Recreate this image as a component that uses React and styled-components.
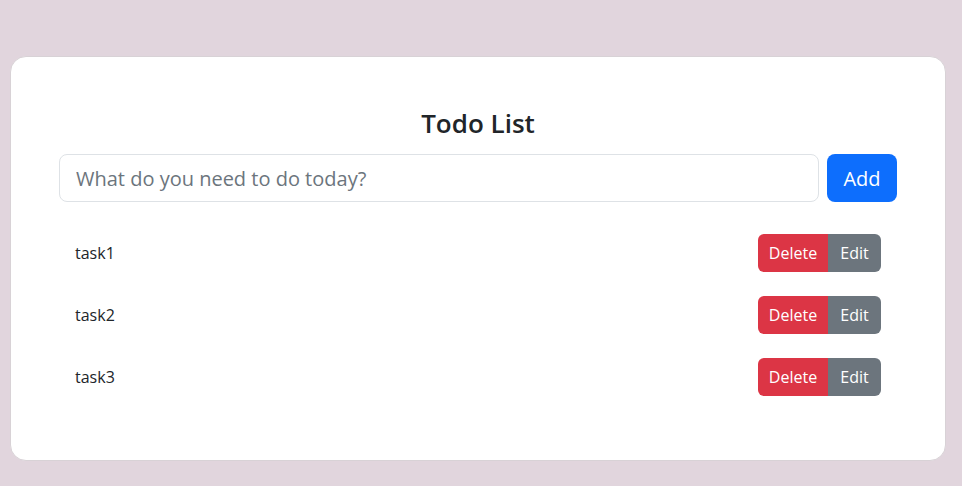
import React, { useState } from "react";
import styled, { createGlobalStyle } from "styled-components";

const GlobalStyle = createGlobalStyle`
  html, body {
    margin: 0;
    padding: 0;
    background: #e1d5dd;
    font-family: "Segoe UI", "Open Sans", "Noto Sans", sans-serif;
    color: #212529;
  }
  * {
    box-sizing: border-box;
  }
`;

const initialTasks = ["task1", "task2", "task3"];

const App = () => {
  const [tasks, setTasks] = useState(initialTasks);
  const [text, setText] = useState("");

  const handleAdd = e => {
    e.preventDefault();
    if (!text.trim()) return;
    setTasks([...tasks, text]);
    setText("");
  };

  const handleDelete = index => {
    setTasks(tasks.filter((_, i) => i !== index));
  };

  return (
    <Page>
      <GlobalStyle />
      <Card>
        <Title>Todo List</Title>
        <Form onSubmit={handleAdd}>
          <Input
            placeholder="What do you need to do today?"
            value={text}
            onChange={e => setText(e.target.value)}
          />
          <AddButton type="submit">Add</AddButton>
        </Form>
        <List>
          {tasks.map((task, i) => (
            <Item key={i}>
              <TaskText>{task}</TaskText>
              <ButtonGroup>
                <SmallButton $variant="danger" $width={70} onClick={() => handleDelete(i)}>
                  Delete
                </SmallButton>
                <SmallButton $variant="secondary" $width={53}>Edit</SmallButton>
              </ButtonGroup>
            </Item>
          ))}
        </List>
      </Card>
    </Page>
  );
};

const Page = styled.div`
  padding: 56px 16px 26px 10px;
`;

const Card = styled.div`
  background: #fff;
  border: 1px solid #d8d2d6;
  border-radius: 16px;
  padding: 47px 48px 52px 48px;
`;

const Title = styled.h2`
  margin: 0 0 15px;
  text-align: center;
  font-size: 26px;
  font-weight: 600;
  line-height: 1.2;
  padding-top: 4px;
`;

const Form = styled.form`
  display: flex;
  gap: 8px;
`;

const Input = styled.input`
  flex: 1;
  height: 48px;
  padding: 8px 16px;
  font-family: inherit;
  font-size: 20px;
  color: #212529;
  border: 1px solid #dee2e6;
  border-radius: 8px;
  outline: none;

  &::placeholder {
    color: #6c757d;
  }
`;

const AddButton = styled.button`
  width: 70px;
  height: 48px;
  font-family: inherit;
  font-size: 20px;
  color: #fff;
  background: #0d6efd;
  border: none;
  border-radius: 8px;
  cursor: pointer;
`;

const List = styled.ul`
  list-style: none;
  margin: 20px 0 0;
  padding: 0;
`;

const Item = styled.li`
  display: flex;
  align-items: center;
  justify-content: space-between;
  padding: 12px 16px;
`;

const TaskText = styled.span`
  font-size: 16px;
`;

const ButtonGroup = styled.div`
  display: flex;
`;

const SmallButton = styled.button`
  width: ${p => p.$width}px;
  height: 38px;
  padding: 0;
  font-family: inherit;
  font-size: 16px;
  color: #fff;
  background: ${p => (p.$variant === "danger" ? "#dc3545" : "#6c757d")};
  border: none;
  cursor: pointer;

  &:first-child {
    border-radius: 6px 0 0 6px;
  }

  &:last-child {
    border-radius: 0 6px 6px 0;
  }
`;

export default App;
